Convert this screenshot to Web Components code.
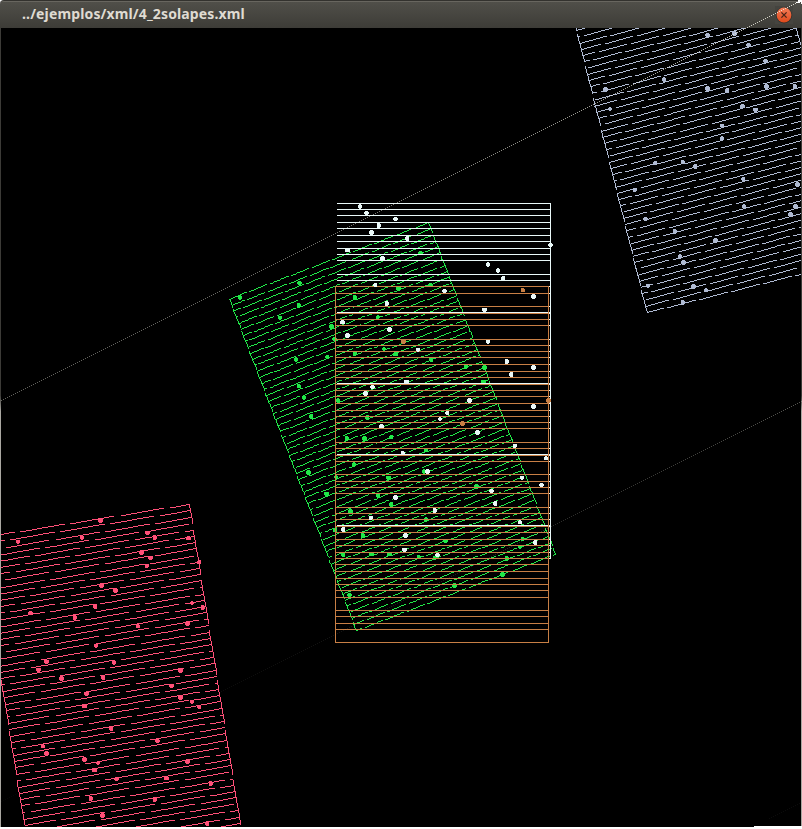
<!DOCTYPE html>
<html lang="es">
<head>
<meta charset="utf-8">
<title>4_2solapes.xml</title>
<style>
html,body{margin:0;background:#fff}
body{width:802px;height:829px;overflow:hidden}
</style>
</head>
<body>
<app-window><title-bar slot="bar">../ejemplos/xml/4_2solapes.xml</title-bar><patch-plot slot="content"></patch-plot></app-window>
<script>
class TitleBar extends HTMLElement{
  constructor(){
    super();
    this.attachShadow({mode:'open'}).innerHTML=`<style>
    :host{display:flex;box-sizing:border-box;height:28px;width:802px;align-items:center;justify-content:space-between;
      padding:0 9.5px 0 22px;border-radius:4px 4px 0 0;border-top:1px solid #33322e;
      background:linear-gradient(#68665f 0 1px,#504f49 1px,#3d3c37);color:#dfdbd2;
      font:bold 14px/24px "Noto Sans","Open Sans",sans-serif}
    span{white-space:nowrap;letter-spacing:.14px;padding-bottom:2px}
    svg{display:block}
    </style><span><slot></slot></span>
    <svg width="18" height="18" viewBox="0 0 18 18"><defs><linearGradient id="g" x2="0" y2="1"><stop stop-color="#f47c58"/><stop offset="1" stop-color="#df4a1b"/></linearGradient></defs>
    <rect width="18" height="18" fill="#45443f"/><circle cx="9" cy="9.3" r="8.1" fill="#32312c"/><circle cx="9" cy="9" r="7.4" fill="url(#g)"/><path d="M6.4 6.4l5.2 5.2M11.6 6.4l-5.2 5.2" stroke="#482418" stroke-width="1.3"/></svg>`;
  }
}
customElements.define('title-bar',TitleBar);

// Each scan patch: three corners (top-left, top-right, bottom-left) and its marks.
const PATCHES=[
 {color:'#afbad2',tl:[560.7,-31.9],tr:[767.9,-83.8],bl:[647,312.5],dots:'707,35 734,33 748,44 765,60 664,79 605,89 707,88 727,90 766,86 794,86 609,108 742,106 755,109 721,125 721,138 655,163 682,162 695,166 634,189 743,179 797,184 744,206 795,206 790,214 645,219 674,231 715,240 680,256 683,262 648,285 693,286 705,290 682,302'},
 {color:'#ff5078',tl:[-21.3,538.4],tr:[189.2,504.6],bl:[35,889],dots:'100,520 17,541 81,537 147,532 154,537 188,538 141,552 150,557 146,565 199,562 101,585 115,590 95,606 30,612 74,617 192,603 202,607 137,626 187,623 96,645 46,661 113,662 38,669 61,678 103,677 180,670 171,685 86,693 84,706 180,697 192,701 199,707 111,728 42,746 46,753 157,740 84,759 97,763 94,770 116,779 187,761 166,778 210,783 90,798 154,799 102,815 207,823'},
 {color:'#20e848',tl:[229.8,299],tr:[429,223],bl:[356.5,630.3],dots:'240,297 299,283 298,305 280,317 331,326 334,339 296,359 327,356 298,386 304,397 311,416 337,400 420,252 430,284 398,288 354,297 377,316 384,348 354,353 395,354 431,359 465,366 484,367 483,381 367,417 346,438 364,438 391,436 425,450 353,464 424,471 388,477 476,486 377,495 391,504 350,511 425,519 336,476 308,472 326,493 335,530 362,535 445,540 522,539 520,547 343,555 371,554 389,554 418,556 434,557 506,558 502,574 454,585 349,595'}
];
const WHITE='#e9f8f8',ORANGE='#c87f45';
const WHITE_ROWS=[203,209,215,222,228,235,241,248,254,260,274,280,312,383,454,525];
const ORANGE_ROWS=[286,293,306,313,319,325,339,345,351,357,364,371,377,384,390,396,403,410,416,422,428,442,448,455,461,474,481,487,493,507,513,519,526,532,539,545,552,558,564,571,578,584,590,597,610,616,623,629,642];
const WHITE_DOTS='360,206 366,212 395,219 378,225 371,232 407,238 347,250 382,258 550,244 488,264 497,270 503,278 375,284 444,291 386,303 533,296 484,309 342,322 389,329 347,335 417,349 488,341 506,361 511,374 533,367 406,381 372,387 365,393 469,400 533,406 447,412 440,419 381,426 477,432 402,452 514,445 545,458 427,471 521,477 541,484 395,497 491,491 495,503 434,510 370,517 520,522 343,529 405,535 404,549 437,555 535,542';
const ORANGE_DOTS='522,290 403,341 548,400 462,423';

// The drawing grid is 9/8 finer than the screen; every ninth column and row is not shown.
const gx=x=>x+Math.floor((x+7)/8), gy=y=>y+Math.floor((y+4)/8);
const colOf=new Map(),rowOf=new Map();
for(let x=1;x<801;x++)colOf.set(gx(x),x);
for(let y=28;y<827;y++)rowOf.set(gy(y),y);
const fx=x=>(x-.5)*9/8+.4, fy=y=>(y-.5)*9/8+.06;

class PatchPlot extends HTMLElement{
  constructor(){
    super();
    this.attachShadow({mode:'open'}).innerHTML=`<style>:host{display:block;height:799px;background:#000;box-sizing:border-box;width:802px;
      border-right:1px solid #b5b3ad;border-left:1px solid;border-image:linear-gradient(#3c3b37 0 46%,#aaa8a2 48%) 1}
      canvas{display:block}</style><canvas width="800" height="799"></canvas>`;
    this.c=this.shadowRoot.querySelector('canvas').getContext('2d');
    this.c.translate(-1,-28);
    this.draw();
  }
  plot(X,Y){const x=colOf.get(X),y=rowOf.get(Y);if(x!==undefined&&y!==undefined)this.c.fillRect(x,y,1,1)}
  line(a,b){
    const x0=Math.round(fx(a[0])),y0=Math.round(fy(a[1])),x1=Math.round(fx(b[0])),y1=Math.round(fy(b[1]));
    const n=Math.max(Math.abs(x1-x0),Math.abs(y1-y0));
    for(let i=0;i<=n;i++)this.plot(Math.round(x0+(x1-x0)*i/n),Math.round(y0+(y1-y0)*i/n));
  }
  dots(list,color){
    this.c.fillStyle=color;
    for(const p of list.split(' ')){
      const [x,y]=p.split(',').map(Number),X=gx(x),Y=gy(y);
      for(let i=-2;i<=2;i++)for(let j=-2;j<=2;j++)if(Math.abs(i)+Math.abs(j)<4)this.plot(X+i,Y+j);
    }
  }
  draw(){
    const c=this.c;
    for(const p of PATCHES){
      c.fillStyle=p.color;
      const w=[p.tr[0]-p.tl[0],p.tr[1]-p.tl[1]],h=[p.bl[0]-p.tl[0],p.bl[1]-p.tl[1]];
      const at=(u,v)=>[p.tl[0]+w[0]*u+h[0]*v,p.tl[1]+w[1]*u+h[1]*v];
      for(let i=0;i<=55;i++)this.line(at(0,i/55),at(1,i/55));
      this.line(at(0,0),at(0,1));this.line(at(1,0),at(1,1));
      this.dots(p.dots,p.color);
    }
    c.fillStyle=WHITE;
    for(const y of WHITE_ROWS)c.fillRect(337,y,214,1);
    for(const y of ORANGE_ROWS)if(y<=558)c.fillRect(549,y,2,1);
    c.fillRect(550,203,1,356);
    c.fillStyle=ORANGE;
    for(const y of ORANGE_ROWS)c.fillRect(335,y,214,1);
    c.fillRect(335,286,1,357);c.fillRect(548,286,1,357);
    this.dots(ORANGE_DOTS,ORANGE);
    this.dots(WHITE_DOTS,WHITE);
  }
}
customElements.define('patch-plot',PatchPlot);

// Dotted guide rays that fade towards the lower left, across the whole window.
class GuideRays extends HTMLElement{
  constructor(){
    super();
    this.attachShadow({mode:'open'}).innerHTML=`<style>:host{display:block;width:802px;height:829px;pointer-events:none}canvas{display:block}</style><canvas width="802" height="829"></canvas>`;
    const c=this.shadowRoot.querySelector('canvas').getContext('2d');
    for(let x=1;x<802;x+=2){
      const t=x/801;
      c.fillStyle=`rgba(235,235,222,${.42+.48*t*t})`;c.fillRect(x,Math.round(400.5-x*.5),1,1);
      c.fillStyle=`rgba(190,190,180,${.03+.42*t*t})`;c.fillRect(x,Math.round(801.5-x*.5),1,1);
    }
    for(let x=769;x<801;x+=2){c.fillStyle='rgba(190,190,180,.06)';c.fillRect(x,Math.round(1202.5-x*.5),1,1)}
    c.fillStyle='#fff';c.fillRect(798,0,4,2);c.fillRect(796,2,4,1);c.fillRect(801,2,1,2);c.fillRect(754,826,48,3);
  }
}
customElements.define('guide-rays',GuideRays);

class AppWindow extends HTMLElement{
  constructor(){
    super();
    this.attachShadow({mode:'open'}).innerHTML=`<style>:host{display:flex;flex-direction:column;position:relative;width:802px;height:829px}
    guide-rays{position:absolute;inset:0}</style><slot name="bar"></slot><slot name="content"></slot><guide-rays></guide-rays>`;
  }
}
customElements.define('app-window',AppWindow);
</script>
</body>
</html>
